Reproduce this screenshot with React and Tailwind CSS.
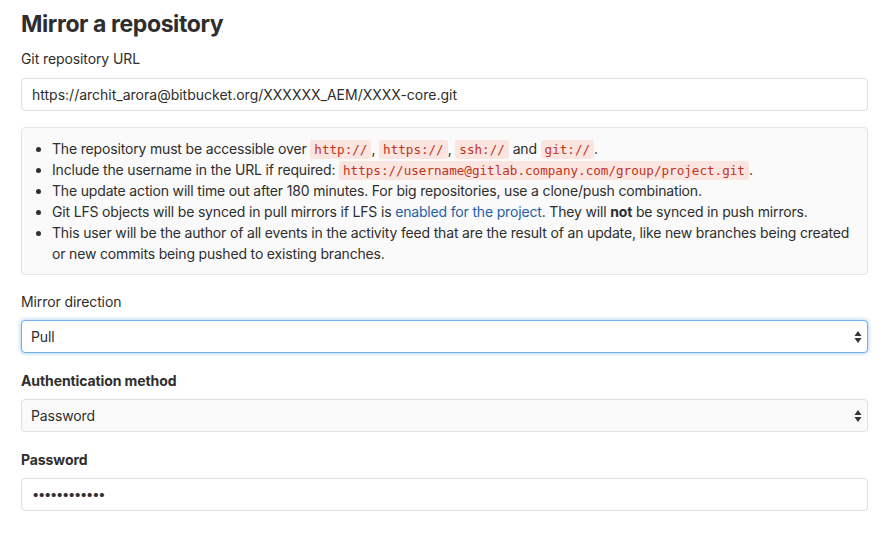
import React from "react";

const Code = ({ children }) => (
  <code className="font-['DejaVu_Sans_Mono',monospace] text-[12.6px] leading-[16px] tracking-normal text-[#c0341d] bg-[#fbe5e1] rounded-[3px] px-[4px] py-[2px]">
    {children}
  </code>
);

const Arrows = () => (
  <svg width="8" height="14" viewBox="0 0 8 14" className="absolute right-[5px] top-1/2 -translate-y-1/2">
    <path d="M4 1 L7.5 6 L0.5 6 Z" fill="#333" />
    <path d="M4 13 L7.5 8 L0.5 8 Z" fill="#333" />
  </svg>
);

export default function App() {
  return (
    <div className="bg-white min-h-[533px] w-[888px] font-['Inter',sans-serif] text-[14px] text-[#2e2e2e] pl-[21px] pr-[20px] pt-[9px] tracking-[-0.1px]">
      <h3 className="text-[23px] font-bold leading-[30px] text-[#2e2e2e] tracking-[-0.4px]">Mirror a repository</h3>
      <div className="mt-[10px] leading-[20px]">Git repository URL</div>
      <div className="mt-[9px] h-[33px] border border-[#dfdfdf] rounded-[4px] flex items-center px-[10px] text-[14px] text-[#2e2e2e] tracking-normal">
        https://archit_arora@bitbucket.org/XXXXXX_AEM/XXXX-core.git
      </div>
      <div className="mt-[16px] bg-[#fafafa] border border-[#e5e5e5] rounded-[4px] pl-[16px] pr-[16px] pt-[10px] pb-[10px]">
        <ul className="list-disc pl-[14px] leading-[21px] marker:text-[#2e2e2e] tracking-[-0.17px]">
          <li>
            The repository must be accessible over <Code>http://</Code>, <Code>https://</Code>, <Code>ssh://</Code> and <Code>git://</Code>.
          </li>
          <li>
            Include the username in the URL if required: <Code>https://username@gitlab.company.com/group/project.git</Code>.
          </li>
          <li>The update action will time out after 180 minutes. For big repositories, use a clone/push combination.</li>
          <li>
            Git LFS objects will be synced in pull mirrors if LFS is <a className="text-[#1f5fa6]">enabled for the project</a>. They will <b>not</b> be synced in push mirrors.
          </li>
          <li>
            This user will be the author of all events in the activity feed that are the result of an update, like new branches being created or new commits being pushed to existing branches.
          </li>
        </ul>
      </div>
      <div className="mt-[17px] leading-[20px]">Mirror direction</div>
      <div className="relative mt-[8px] h-[33px] border border-[#73afea] rounded-[4px] shadow-[0_0_4px_rgba(31,120,209,0.45)] flex items-center px-[9px] bg-white">
        <span>Pull</span>
        <Arrows />
      </div>
      <div className="mt-[18px] leading-[20px] font-bold">Authentication method</div>
      <div className="relative mt-[8px] h-[33px] border border-[#e0e0e0] rounded-[4px] flex items-center px-[9px] bg-[#fafafa]">
        <span>Password</span>
        <Arrows />
      </div>
      <div className="mt-[18px] leading-[20px] font-bold">Password</div>
      <div className="mt-[8px] h-[33px] border border-[#dfdfdf] rounded-[4px] flex items-center px-[10px] bg-white">
        <span className="tracking-[-1.3px] text-[13px]">••••••••••••</span>
      </div>
    </div>
  );
}
